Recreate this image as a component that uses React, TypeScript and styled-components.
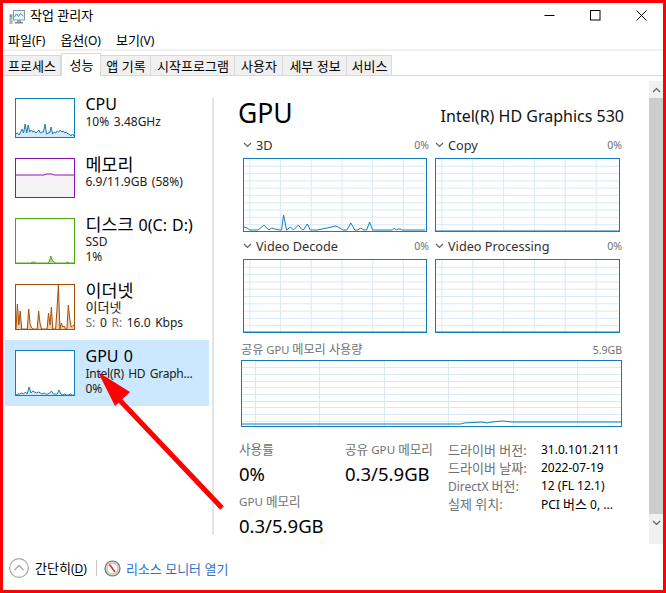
import styled, { createGlobalStyle } from "styled-components";

const GlobalStyle = createGlobalStyle`
    html, body {
        margin: 0;
        padding: 0;
        background: #fff;
    }
    * {
        box-sizing: border-box;
    }
`;

const Frame = styled.div`
    position: relative;
    display: flex;
    flex-direction: column;
    width: 666px;
    height: 593px;
    border: 3px solid #ff0000;
    overflow: hidden;
    background: #fff;
    color: #000;
    font-family: "Noto Sans", "Noto Sans CJK KR", sans-serif;
    font-size: 12px;
`;

// hangul in the CJK font runs narrower than the latin around it
const Ko = styled.span`
    font-size: 1.085em;
`;

const TitleBar = styled.div`
    display: flex;
    align-items: center;
    height: 27px;
    padding-left: 6px;
    flex-shrink: 0;
`;

const AppTitle = styled.span`
    margin: -3px 0 0 5px;
    font-size: 13px;
    line-height: 16px;
`;

const WindowButtons = styled.div`
    display: flex;
    margin: -2px -1px 0 auto;
`;

const WindowButton = styled.div`
    display: flex;
    align-items: center;
    justify-content: center;
    width: 46px;
    height: 27px;
`;

const MenuBar = styled.div`
    display: flex;
    gap: 15px;
    height: 19px;
    padding: 2px 0 0 5px;
    flex-shrink: 0;
`;

const MenuItem = styled.span`
    font-size: 12px;
    line-height: 17px;
`;

const TabStrip = styled.div`
    display: flex;
    align-items: flex-end;
    height: 27px;
    flex-shrink: 0;
    border-top: 2px solid #f0f0f0;
    border-bottom: 1px solid #d9d9d9;
`;

const Tab = styled.div<{ $active?: boolean; $width: number }>`
    display: flex;
    align-items: center;
    justify-content: center;
    width: ${(props) => props.$width}px;
    height: ${(props) => (props.$active ? 23 : 20)}px;
    margin-bottom: ${(props) => (props.$active ? -1 : 0)}px;
    padding-left: 1px;
    background: ${(props) => (props.$active ? "#fff" : "#f0f0f0")};
    border: 1px solid #d9d9d9;
    border-left-width: ${(props) => (props.$active ? 1 : 0)}px;
    border-bottom-width: 0;
    font-size: 13px;
    line-height: 16px;
    white-space: nowrap;
`;

const Body = styled.div`
    display: flex;
    flex: 1;
    min-height: 0;
`;

const Sidebar = styled.div`
    width: 209px;
    padding: 12px 0 0 2px;
    flex-shrink: 0;
`;

const SideItem = styled.div<{ $selected?: boolean }>`
    display: flex;
    gap: 10.5px;
    width: 204px;
    padding: 10px 0 10px 10px;
    background: ${(props) => (props.$selected ? "#cce8ff" : "transparent")};
`;

const Thumb = styled.div<{ $color: string; $height: number }>`
    width: 60px;
    height: ${(props) => props.$height}px;
    border: 1px solid ${(props) => props.$color};
    flex-shrink: 0;
    background: #fff;
    svg {
        display: block;
        width: 58px;
        height: ${(props) => props.$height - 2}px;
    }
`;

const SideText = styled.div`
    display: flex;
    flex-direction: column;
    height: 40px;
    margin-top: -4px;
`;

const SideTitle = styled.div`
    height: 20px;
    font-size: 16px;
    line-height: 20px;
    white-space: nowrap;
    word-spacing: 1px;
`;

const SideSub = styled.div`
    height: 15px;
    font-size: 12px;
    line-height: 15px;
    white-space: nowrap;
    word-spacing: 1.5px;
    color: #202020;
`;

const SideSubTight = styled(SideSub)`
    letter-spacing: -0.25px;
`;

const SideKey = styled.span`
    color: #707070;
`;

const Divider = styled.div`
    width: 2px;
    margin: 22px 0 11px;
    background: #e4e4e4;
    flex-shrink: 0;
`;

const Main = styled.div`
    flex: 1;
    min-width: 0;
    padding: 21px 25px 0 24px;
`;

const Heading = styled.div`
    display: flex;
    align-items: flex-end;
    justify-content: space-between;
    height: 33px;
    margin-bottom: 6px;
`;

const GpuTitle = styled.div`
    font-size: 26.5px;
    line-height: 33px;
    margin-top: -4px;
`;

const GpuName = styled.div`
    font-size: 16px;
    line-height: 20px;
    margin-bottom: 4px;
    color: #111;
`;

const ChartGrid = styled.div`
    display: grid;
    grid-template-columns: 184px 185px;
    column-gap: 8px;
    row-gap: 5px;
    margin-left: 5px;
`;

const ChartHead = styled.div`
    display: flex;
    align-items: center;
    justify-content: space-between;
    height: 16px;
    margin: 0 -2px 6px 0;
    padding-top: 1px;
`;

const ChartName = styled.div`
    display: flex;
    align-items: center;
    gap: 4px;
    font-size: 12.7px;
    line-height: 16px;
    color: #303030;
`;

const Muted = styled.div`
    font-size: 10.5px;
    line-height: 16px;
    color: #707070;
`;

const ChartBox = styled.div<{ $height: number }>`
    height: ${(props) => props.$height}px;
    border: 1px solid #117dbb;
    background: #fff;
    svg {
        display: block;
        width: 100%;
        height: 100%;
    }
`;

const SharedHead = styled.div`
    display: flex;
    align-items: center;
    justify-content: space-between;
    height: 16px;
    margin: 9px 0 2px 3px;
    width: 381px;
`;

const SharedName = styled.div`
    font-size: 11.2px;
    line-height: 16px;
    color: #707070;
`;

const SharedBox = styled(ChartBox)`
    width: 381px;
    margin-left: 3px;
`;

const Stats = styled.div`
    display: flex;
    margin: 15px 0 0 1px;
`;

const StatColumns = styled.div`
    display: grid;
    grid-template-columns: 106px 103px;
    grid-auto-rows: 52px;
`;

const Stat = styled.div`
    display: flex;
    flex-direction: column;
`;

const StatLabel = styled.div`
    height: 16px;
    font-size: 11.6px;
    line-height: 16px;
    color: #707070;
    white-space: nowrap;
`;

const StatValue = styled.div`
    margin-top: 4px;
    font-size: 18.5px;
    line-height: 24px;
    white-space: nowrap;
`;

const Details = styled.div`
    display: grid;
    grid-template-columns: 93px auto;
    grid-auto-rows: 18px;
`;

const DetailKey = styled.div`
    font-size: 12px;
    line-height: 16px;
    color: #707070;
    white-space: nowrap;
`;

const DetailValue = styled.div`
    font-size: 12px;
    line-height: 16px;
    white-space: nowrap;
`;

const ScrollBar = styled.div`
    display: flex;
    flex-direction: column;
    width: 14px;
    margin: 5px 0 2px;
    flex-shrink: 0;
    background: #f0f0f0;
`;

const ScrollArrow = styled.div`
    display: flex;
    align-items: center;
    justify-content: center;
    height: 17px;
`;

const ScrollThumb = styled.div`
    height: 416px;
    background: #cdcdcd;
`;

const Footer = styled.div`
    display: flex;
    align-items: center;
    height: 44px;
    padding-left: 6px;
    flex-shrink: 0;
`;

const FooterText = styled.span`
    margin: 1px 0 0 6px;
    font-size: 12px;
    line-height: 16px;
    u {
        text-underline-offset: 2px;
    }
`;

const FooterRule = styled.div`
    width: 1px;
    height: 16px;
    margin: 0 7px 0 9px;
    background: #c8c8c8;
`;

const FooterLink = styled.span`
    margin: 1px 0 0 5px;
    font-size: 13px;
    line-height: 16px;
    color: #2f6fcf;
`;

const ArrowOverlay = styled.svg`
    position: absolute;
    left: -3px;
    top: -3px;
    width: 666px;
    height: 593px;
    pointer-events: none;
`;

function toPoints(values: number[], width: number, height: number) {
    const step = width / (values.length - 1);
    return values.map((v, i) => `${(i * step).toFixed(1)},${(height - v).toFixed(1)}`).join(" ");
}

function Spark({
    values,
    height,
    color,
    fill,
}: {
    values: number[];
    height: number;
    color: string;
    fill: string;
}) {
    const line = toPoints(values, 58, height);
    return (
        <svg viewBox={`0 0 58 ${height}`}>
            <polygon points={`0,${height} ${line} 58,${height}`} fill={fill} />
            <polyline points={line} fill="none" stroke={color} strokeWidth="1" />
        </svg>
    );
}

const gridBlue = "#d9eaf6";

function GridChart({
    width,
    height,
    offset,
    pitch,
    rowPitch,
    line,
}: {
    width: number;
    height: number;
    offset: number;
    pitch: number;
    rowPitch: number;
    line: string;
}) {
    const cols: number[] = [];
    for (let x = offset; x < width; x += pitch) cols.push(x);
    const rows: number[] = [];
    for (let y = rowPitch; y < height; y += rowPitch) rows.push(y);
    return (
        <svg viewBox={`0 0 ${width} ${height}`} preserveAspectRatio="none">
            <g shapeRendering="crispEdges">
                {cols.map((x) => (
                    <line key={x} x1={x} x2={x} y1="0" y2={height} stroke={gridBlue} strokeWidth="1" />
                ))}
                {rows.map((y) => (
                    <line key={y} x1="0" x2={width} y1={y} y2={y} stroke={gridBlue} strokeWidth="1" />
                ))}
            </g>
            <polyline points={line} fill="none" stroke="#117dbb" strokeWidth="1" />
        </svg>
    );
}

const cpuData = [3, 4, 2, 5, 8, 4, 13, 4, 12, 5, 7, 5, 6, 4, 5, 7, 4, 5, 5, 13, 3, 4, 4, 10, 3, 5, 4, 6, 5, 7, 5, 6, 4, 5, 3, 3, 1, 3, 1];
const memData = Array.from({ length: 30 }, (_, i) => (i > 14 && i < 19 ? 23 : 22));
const diskData = [0, 0, 0, 0, 0, 0, 0, 0, 0, 0, 1, 1, 0, 0, 0, 0, 0, 0, 0, 0, 1, 7, 2, 1, 0, 0, 0, 0, 0, 0, 0, 1, 0, 0, 0, 0];
const ethData = [0, 25, 4, 18, 0, 0, 0, 0, 0, 20, 5, 1, 0, 0, 0, 0, 18, 6, 0, 0, 0, 0, 0, 16, 4, 22, 0, 0, 0, 20, 44, 0, 6, 2, 3, 0, 0, 24, 10, 2, 3, 4];
const gpuData = [0, 1, 1, 2, 1, 3, 1, 8, 2, 4, 3, 2, 3, 2, 1, 2, 1, 1, 2, 4, 1, 1, 1, 5, 1, 0, 1, 0, 0, 1, 0, 0];

const line3d =
    "0,68 3,69 6,71 14,71 18,68 20,66 23,69 25,71 28,69 31,70 36,71 38,71 40,56 43,71 47,68 50,71 55,66 58,70 60,71 64,65 67,71 74,71 84,69 93,67 97,69 100,71 104,71 108,64 112,71 115,71 118,69 121,71 124,71 127,63 130,71 150,71 152,69 154,71 156,70 158,70 160,71 183,71";
const lineShared =
    "0,63 200,63 219,63 222,62 240,61 245,62 250,61 260,60 270,61 300,61 379,61";
const lineFlat = "0,72 184,72";

const tabs = [
    { label: "프로세스", width: 58 },
    { label: "성능", width: 40, active: true },
    { label: "앱 기록", width: 50 },
    { label: "시작프로그램", width: 84 },
    { label: "사용자", width: 48 },
    { label: "세부 정보", width: 64 },
    { label: "서비스", width: 45 },
];

const chartRows = [
    { name: "3D", line: line3d },
    { name: "Copy", line: lineFlat },
    { name: "Video Decode", line: lineFlat },
    { name: "Video Processing", line: lineFlat },
];

function Chevron({ up, color = "#606060" }: { up?: boolean; color?: string }) {
    return (
        <svg width="9" height="6" viewBox="0 0 9 6">
            <path d={up ? "M1 5 L4.5 1.5 L8 5" : "M1 1 L4.5 4.5 L8 1"} fill="none" stroke={color} strokeWidth="1.2" />
        </svg>
    );
}

function TaskIcon() {
    return (
        <svg width="16" height="16" viewBox="0 0 16 16">
            <rect x="0.5" y="5" width="3" height="10" fill="#a9b2b8" />
            <rect x="1" y="6" width="2" height="2" fill="#5fae4a" />
            <rect x="4.5" y="1.5" width="11" height="9.5" fill="#eaf5fb" stroke="#8b979e" />
            <path d="M5.5 8 L7.5 5 L9.5 7.5 L11.5 4.5 L14.5 7" fill="none" stroke="#3a8fd0" strokeWidth="1" />
            <rect x="8" y="11" width="4" height="2" fill="#9aa4aa" />
            <rect x="6" y="13" width="8" height="1.5" fill="#7f8a90" />
        </svg>
    );
}

function MonitorIcon() {
    return (
        <svg width="17" height="17" viewBox="0 0 17 17">
            <circle cx="8.5" cy="8.5" r="7.5" fill="#d8d4cc" stroke="#77736c" strokeWidth="1.2" />
            <circle cx="8.5" cy="8.5" r="5.2" fill="#fff" stroke="#b0aca4" strokeWidth="0.6" />
            <path d="M5.5 4.5 L11 12" stroke="#d8322a" strokeWidth="1.6" />
        </svg>
    );
}

function App() {
    return (
        <Frame>
            <GlobalStyle />
            <TitleBar>
                <TaskIcon />
                <AppTitle>작업 관리자</AppTitle>
                <WindowButtons>
                    <WindowButton>
                        <svg width="11" height="11" viewBox="0 0 11 11">
                            <path d="M0.5 5.5 H10.5" stroke="#000" strokeWidth="1" />
                        </svg>
                    </WindowButton>
                    <WindowButton>
                        <svg width="11" height="11" viewBox="0 0 11 11">
                            <rect x="0.5" y="0.5" width="9.5" height="9.5" fill="none" stroke="#000" strokeWidth="1" />
                        </svg>
                    </WindowButton>
                    <WindowButton>
                        <svg width="11" height="11" viewBox="0 0 11 11">
                            <path d="M0.5 0.5 L10.5 10.5 M10.5 0.5 L0.5 10.5" stroke="#000" strokeWidth="1" />
                        </svg>
                    </WindowButton>
                </WindowButtons>
            </TitleBar>
            <MenuBar>
                <MenuItem>
                    <Ko>파일</Ko>(F)
                </MenuItem>
                <MenuItem>
                    <Ko>옵션</Ko>(O)
                </MenuItem>
                <MenuItem>
                    <Ko>보기</Ko>(V)
                </MenuItem>
            </MenuBar>
            <TabStrip>
                {tabs.map((tab) => (
                    <Tab key={tab.label} $active={tab.active} $width={tab.width}>
                        {tab.label}
                    </Tab>
                ))}
            </TabStrip>
            <Body>
                <Sidebar>
                    <SideItem>
                        <Thumb $color="#117dbb" $height={40}>
                            <Spark values={cpuData} height={38} color="#117dbb" fill="#d9eaf6" />
                        </Thumb>
                        <SideText>
                            <SideTitle>CPU</SideTitle>
                            <SideSub>10% 3.48GHz</SideSub>
                        </SideText>
                    </SideItem>
                    <SideItem>
                        <Thumb $color="#8b12ae" $height={40}>
                            <Spark values={memData} height={38} color="#8b12ae" fill="#f4f2f4" />
                        </Thumb>
                        <SideText>
                            <SideTitle>
                                <Ko>메모리</Ko>
                            </SideTitle>
                            <SideSub>6.9/11.9GB (58%)</SideSub>
                        </SideText>
                    </SideItem>
                    <SideItem>
                        <Thumb $color="#4da60c" $height={46}>
                            <Spark values={diskData} height={44} color="#4da60c" fill="#b8dca0" />
                        </Thumb>
                        <SideText>
                            <SideTitle>
                                <Ko>디스크</Ko> 0(C: D:)
                            </SideTitle>
                            <SideSub>SSD</SideSub>
                            <SideSub>1%</SideSub>
                        </SideText>
                    </SideItem>
                    <SideItem>
                        <Thumb $color="#a74f01" $height={46}>
                            <Spark values={ethData} height={44} color="#a74f01" fill="#eccfb6" />
                        </Thumb>
                        <SideText>
                            <SideTitle>
                                <Ko>이더넷</Ko>
                            </SideTitle>
                            <SideSub>
                                <Ko>이더넷</Ko>
                            </SideSub>
                            <SideSub>
                                <SideKey>S:</SideKey> 0 <SideKey>R:</SideKey> 16.0 Kbps
                            </SideSub>
                        </SideText>
                    </SideItem>
                    <SideItem $selected>
                        <Thumb $color="#117dbb" $height={46}>
                            <Spark values={gpuData} height={44} color="#117dbb" fill="#d9eaf6" />
                        </Thumb>
                        <SideText>
                            <SideTitle>GPU 0</SideTitle>
                            <SideSubTight>Intel(R) HD Graph...</SideSubTight>
                            <SideSub>0%</SideSub>
                        </SideText>
                    </SideItem>
                </Sidebar>
                <Divider />
                <Main>
                    <Heading>
                        <GpuTitle>GPU</GpuTitle>
                        <GpuName>Intel(R) HD Graphics 530</GpuName>
                    </Heading>
                    <ChartGrid>
                        {chartRows.map((chart) => (
                            <div key={chart.name}>
                                <ChartHead>
                                    <ChartName>
                                        <Chevron />
                                        {chart.name}
                                    </ChartName>
                                    <Muted>0%</Muted>
                                </ChartHead>
                                <ChartBox $height={74}>
                                    <GridChart
                                        width={184}
                                        height={72}
                                        offset={6}
                                        pitch={31}
                                        rowPitch={7.3}
                                        line={chart.line}
                                    />
                                </ChartBox>
                            </div>
                        ))}
                    </ChartGrid>
                    <SharedHead>
                        <SharedName>
                            <Ko>공유</Ko> GPU <Ko>메모리 사용량</Ko>
                        </SharedName>
                        <Muted>5.9GB</Muted>
                    </SharedHead>
                    <SharedBox $height={67}>
                        <GridChart width={379} height={65} offset={13} pitch={64.5} rowPitch={6.7} line={lineShared} />
                    </SharedBox>
                    <Stats>
                        <StatColumns>
                            <Stat>
                                <StatLabel>
                                    <Ko>사용률</Ko>
                                </StatLabel>
                                <StatValue>0%</StatValue>
                            </Stat>
                            <Stat>
                                <StatLabel>
                                    <Ko>공유</Ko> GPU <Ko>메모리</Ko>
                                </StatLabel>
                                <StatValue>0.3/5.9GB</StatValue>
                            </Stat>
                            <Stat>
                                <StatLabel>
                                    GPU <Ko>메모리</Ko>
                                </StatLabel>
                                <StatValue>0.3/5.9GB</StatValue>
                            </Stat>
                        </StatColumns>
                        <Details>
                            <DetailKey>
                                <Ko>드라이버 버전:</Ko>
                            </DetailKey>
                            <DetailValue>31.0.101.2111</DetailValue>
                            <DetailKey>
                                <Ko>드라이버 날짜:</Ko>
                            </DetailKey>
                            <DetailValue>2022-07-19</DetailValue>
                            <DetailKey>
                                DirectX <Ko>버전:</Ko>
                            </DetailKey>
                            <DetailValue>12 (FL 12.1)</DetailValue>
                            <DetailKey>
                                <Ko>실제 위치:</Ko>
                            </DetailKey>
                            <DetailValue>
                                PCI <Ko>버스</Ko> 0, ...
                            </DetailValue>
                        </Details>
                    </Stats>
                </Main>
                <ScrollBar>
                    <ScrollArrow>
                        <Chevron up />
                    </ScrollArrow>
                    <ScrollThumb />
                    <ScrollArrow>
                        <Chevron />
                    </ScrollArrow>
                </ScrollBar>
            </Body>
            <Footer>
                <svg width="20" height="20" viewBox="0 0 20 20">
                    <circle cx="10" cy="10" r="9.3" fill="#fff" stroke="#a8a8a8" strokeWidth="1.2" />
                    <path d="M5.5 12 L10 7.5 L14.5 12" fill="none" stroke="#a8a8a8" strokeWidth="1.3" />
                </svg>
                <FooterText>
                    <Ko>간단히</Ko>(<u>D</u>)
                </FooterText>
                <FooterRule />
                <MonitorIcon />
                <FooterLink>리소스 모니터 열기</FooterLink>
            </Footer>
            <ArrowOverlay viewBox="0 0 666 593">
                <path d="M222 508 L112 392" stroke="#ff0000" strokeWidth="5" fill="none" />
                <polygon points="98,372 130,392 115,406" fill="#ff0000" />
            </ArrowOverlay>
        </Frame>
    );
}

export default App;
